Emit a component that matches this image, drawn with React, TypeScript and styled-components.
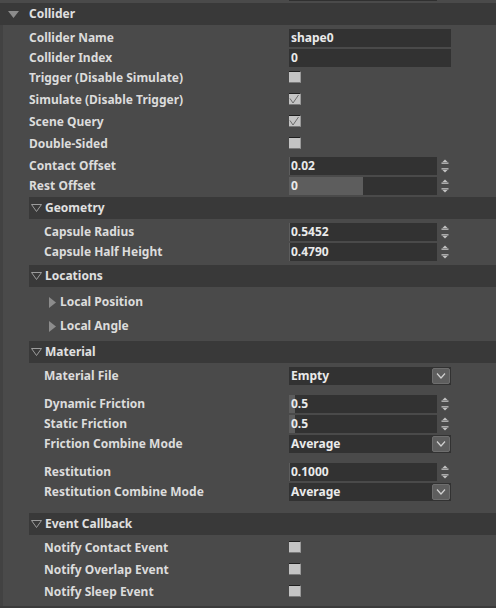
import React from 'react';
import styled, { createGlobalStyle } from 'styled-components';

const GlobalStyle = createGlobalStyle`
  html, body {
    margin: 0;
    padding: 0;
    background: #4a4a4a;
  }
  body {
    font-family: "Noto Sans", "DejaVu Sans", sans-serif;
    font-size: 12px;
    font-weight: 700;
    color: #dcdcdc;
  }
`;

type Field =
  | { kind: 'text'; label: string; value: string }
  | { kind: 'number'; label: string; value: string; fill: number }
  | { kind: 'check'; label: string; checked: boolean }
  | { kind: 'select'; label: string; value: string }
  | { kind: 'folder'; label: string }
  | { kind: 'gap'; size: number };

const Page = styled.div`
  width: 496px;
  height: 608px;
  overflow: hidden;
  display: flex;
  flex-direction: column;
  box-sizing: border-box;
  border-bottom: 2px solid #3b3b3b;
`;

const TopStrip = styled.div`
  height: 3px;
  flex-shrink: 0;
`;

const PrevTail = styled.div`
  margin-left: 289px;
  width: 148px;
  height: 1px;
  background: #303030;
`;

const Header = styled.div<{ $indent: number; $sub?: boolean }>`
  height: 22px;
  flex-shrink: 0;
  display: flex;
  align-items: center;
  gap: ${p => (p.$sub ? 3 : 10)}px;
  margin-left: ${p => p.$indent}px;
  padding-left: ${p => (p.$sub ? 2 : 8)}px;
  background: #393939;
  color: #e0e0e0;
  line-height: 22px;
`;

const Body = styled.div<{ $pt: number; $pb: number }>`
  display: flex;
  flex-direction: column;
  padding: ${p => p.$pt}px 0 ${p => p.$pb}px;
  flex-shrink: 0;
`;

const Outer = styled.div`
  display: flex;
  flex-direction: column;
  flex: 1;
  border-left: 3px solid #424242;
`;

const Row = styled.div<{ $h: number; $pt: number }>`
  height: ${p => p.$h}px;
  flex-shrink: 0;
  box-sizing: border-box;
  padding-top: ${p => p.$pt}px;
  display: flex;
  align-items: flex-start;
`;

const Label = styled.div<{ $indent: number }>`
  width: ${p => 286 - p.$indent}px;
  padding-left: ${p => p.$indent}px;
  line-height: 18px;
  white-space: nowrap;
  display: flex;
  align-items: center;
  gap: 4px;
`;

const InputBox = styled.div<{ $w: number }>`
  position: relative;
  width: ${p => p.$w}px;
  height: 18px;
  background: #323232;
  overflow: hidden;
`;

const Fill = styled.div`
  position: absolute;
  left: 0;
  top: 0;
  bottom: 0;
  background: #5d5d5d;
`;

const InputText = styled.span`
  position: relative;
  display: block;
  padding-left: 2px;
  line-height: 18px;
  color: #eaeaea;
`;

const NumberWrap = styled.div`
  display: flex;
  align-items: center;
  gap: 4px;
`;

const Check = styled.div`
  margin-top: 2px;
  width: 12px;
  height: 12px;
  box-sizing: border-box;
  background: #c4c4c4;
  border-top: 1px solid #1f1f1f;
  border-bottom: 1px solid #7a7a7a;
  border-right: 1px solid #9a9a9a;
  display: flex;
`;

const SelectButton = styled.div`
  position: absolute;
  right: 1px;
  top: 1px;
  width: 18px;
  height: 16px;
  box-sizing: border-box;
  background: #5e5e5e;
  border: 1px solid #6e6e6e;
  border-radius: 2px;
  display: flex;
  align-items: center;
  justify-content: center;
`;

const Spin = () => (
  <svg width="8" height="16" viewBox="0 0 8 16">
    <polygon points="4,1.5 6.5,4 1.5,4" fill="#c2c2c2" />
    <rect x="0.5" y="4.5" width="7" height="1.3" fill="#c2c2c2" />
    <rect x="0.5" y="10.2" width="7" height="1.3" fill="#c2c2c2" />
    <polygon points="1.5,12 6.5,12 4,14.5" fill="#c2c2c2" />
  </svg>
);

const DownFilled = () => (
  <svg width="11" height="7" viewBox="0 0 11 7">
    <polygon points="0,0 11,0 5.5,7" fill="#8c8c8c" />
  </svg>
);

const DownOutline = () => (
  <svg width="11" height="8" viewBox="0 0 11 8">
    <polygon points="0.5,0.5 10.5,0.5 5.5,7.5" fill="none" stroke="#9c9c9c" strokeWidth="1" />
  </svg>
);

const RightFilled = () => (
  <svg width="7" height="11" viewBox="0 0 7 11">
    <polygon points="0,0 7,5.5 0,11" fill="#8c8c8c" />
  </svg>
);

const CheckMark = () => (
  <svg width="10" height="10" viewBox="0 0 10 10">
    <polyline points="1,4.5 4,9 9.5,1" fill="none" stroke="#6a6a6a" strokeWidth="1" />
  </svg>
);

const Chevron = () => (
  <svg width="10" height="6" viewBox="0 0 10 6">
    <polyline points="1,0.5 5,5 9,0.5" fill="none" stroke="#d0d0d0" strokeWidth="1.2" />
  </svg>
);

const FieldRow: React.FC<{ field: Field; indent: number }> = ({ field, indent }) => {
  switch (field.kind) {
    case 'gap':
      return <Row $h={field.size} $pt={0} />;
    case 'folder':
      return (
        <Row $h={24} $pt={4}>
          <Label $indent={indent + 5}>
            <RightFilled />
            {field.label}
          </Label>
        </Row>
      );
    case 'check':
      return (
        <Row $h={22} $pt={1}>
          <Label $indent={indent}>{field.label}</Label>
          <Check>{field.checked && <CheckMark />}</Check>
        </Row>
      );
    case 'text':
      return (
        <Row $h={20} $pt={1}>
          <Label $indent={indent}>{field.label}</Label>
          <InputBox $w={162}>
            <InputText>{field.value}</InputText>
          </InputBox>
        </Row>
      );
    case 'select':
      return (
        <Row $h={20} $pt={1}>
          <Label $indent={indent}>{field.label}</Label>
          <InputBox $w={162}>
            <InputText>{field.value}</InputText>
            <SelectButton>
              <Chevron />
            </SelectButton>
          </InputBox>
        </Row>
      );
    case 'number':
      return (
        <Row $h={20} $pt={1}>
          <Label $indent={indent}>{field.label}</Label>
          <NumberWrap>
            <InputBox $w={148}>
              <Fill style={{ width: field.fill }} />
              <InputText>{field.value}</InputText>
            </InputBox>
            <Spin />
          </NumberWrap>
        </Row>
      );
  }
};

const collider: Field[] = [
  { kind: 'text', label: 'Collider Name', value: 'shape0' },
  { kind: 'text', label: 'Collider Index', value: '0' },
  { kind: 'check', label: 'Trigger (Disable Simulate)', checked: false },
  { kind: 'check', label: 'Simulate (Disable Trigger)', checked: true },
  { kind: 'check', label: 'Scene Query', checked: true },
  { kind: 'check', label: 'Double-Sided', checked: false },
  { kind: 'number', label: 'Contact Offset', value: '0.02', fill: 1 },
  { kind: 'number', label: 'Rest Offset', value: '0', fill: 74 },
];

const sections: { title: string; pt: number; pb: number; fields: Field[] }[] = [
  {
    title: 'Geometry',
    pt: 3,
    pb: 3,
    fields: [
      { kind: 'number', label: 'Capsule Radius', value: '0.5452', fill: 1 },
      { kind: 'number', label: 'Capsule Half Height', value: '0.4790', fill: 1 },
    ],
  },
  {
    title: 'Locations',
    pt: 2,
    pb: 4,
    fields: [
      { kind: 'folder', label: 'Local Position' },
      { kind: 'folder', label: 'Local Angle' },
    ],
  },
  {
    title: 'Material',
    pt: 3,
    pb: 11,
    fields: [
      { kind: 'select', label: 'Material File', value: 'Empty' },
      { kind: 'gap', size: 8 },
      { kind: 'number', label: 'Dynamic Friction', value: '0.5', fill: 6 },
      { kind: 'number', label: 'Static Friction', value: '0.5', fill: 6 },
      { kind: 'select', label: 'Friction Combine Mode', value: 'Average' },
      { kind: 'gap', size: 8 },
      { kind: 'number', label: 'Restitution', value: '0.1000', fill: 1 },
      { kind: 'select', label: 'Restitution Combine Mode', value: 'Average' },
    ],
  },
  {
    title: 'Event Callback',
    pt: 3,
    pb: 0,
    fields: [
      { kind: 'check', label: 'Notify Contact Event', checked: false },
      { kind: 'check', label: 'Notify Overlap Event', checked: false },
      { kind: 'check', label: 'Notify Sleep Event', checked: false },
    ],
  },
];

export default function App() {
  return (
    <>
      <GlobalStyle />
      <Page>
        <TopStrip>
          <PrevTail />
        </TopStrip>
        <Header $indent={0}>
          <DownFilled />
          Collider
        </Header>
        <Outer>
          <Body $pt={3} $pb={1}>
            {collider.map((f, i) => (
              <FieldRow key={i} field={f} indent={26} />
            ))}
          </Body>
          {sections.map(s => (
            <React.Fragment key={s.title}>
              <Header $indent={26} $sub>
                <DownOutline />
                {s.title}
              </Header>
              <Body $pt={s.pt} $pb={s.pb}>
                {s.fields.map((f, i) => (
                  <FieldRow key={i} field={f} indent={41} />
                ))}
              </Body>
            </React.Fragment>
          ))}
        </Outer>
      </Page>
    </>
  );
}
